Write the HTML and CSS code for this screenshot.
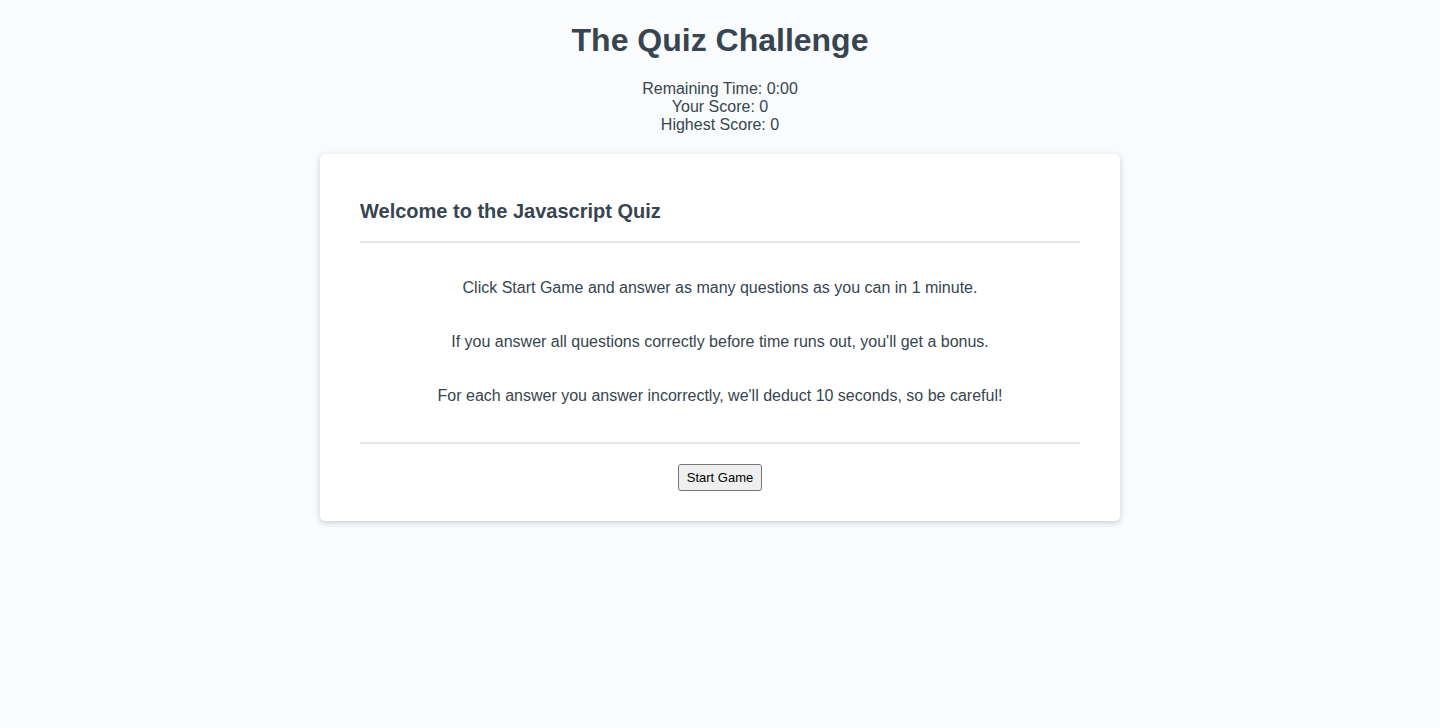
FILE: index.html
```html
<!DOCTYPE html>
<html lang="en">
<head>
<meta charset="utf-8">
<title>The Quiz Challenge</title>
<link rel="stylesheet" href="styles.css">
</head>
<body>
<header class="top">
  <h1 class="title">The Quiz Challenge</h1>
  <div class="stats">
    <div>Remaining Time: 0:00</div>
    <div>Your Score: 0</div>
    <div>Highest Score: 0</div>
  </div>
</header>
<main class="card">
  <div class="card-header">
    <h2 class="card-title">Welcome to the Javascript Quiz</h2>
  </div>
  <div class="card-body">
    <p>Click Start Game and answer as many questions as you can in 1 minute.</p>
    <p>If you answer all questions correctly before time runs out, you'll get a bonus.</p>
    <p>For each answer you answer incorrectly, we'll deduct 10 seconds, so be careful!</p>
  </div>
  <div class="card-footer">
    <button class="btn" type="button">Start Game</button>
  </div>
</main>
</body>
</html>
```

FILE: styles.css
```css
html, body {
  margin: 0;
  padding: 0;
}
body {
  background: #f9fbfd;
  color: #36454f;
  font-family: "Liberation Sans", Arial, Helvetica, sans-serif;
  font-size: 16px;
  line-height: 18px;
  min-height: 728px;
}
.top {
  text-align: center;
  padding-top: 22px;
}
.title {
  margin: 0;
  font-size: 32px;
  line-height: 37px;
  font-weight: bold;
}
.stats {
  margin-top: 21px;
}
.card {
  width: 800px;
  box-sizing: border-box;
  margin: 20px auto 0;
  background: #fff;
  border-radius: 5px;
  box-shadow: 0 2px 6px rgba(0, 0, 0, 0.18);
  padding: 46px 40px 30px;
}
.card-header {
  padding-bottom: 18px;
  border-bottom: 2px solid #e6e6e6;
}
.card-title {
  margin: 0;
  font-size: 20px;
  line-height: 23px;
  font-weight: bold;
}
.card-body {
  padding: 36px 0 37px;
  border-bottom: 2px solid #e6e6e6;
  display: flex;
  flex-direction: column;
  gap: 36px;
  text-align: center;
}
.card-body p {
  margin: 0;
  line-height: 18px;
}
.card-footer {
  padding-top: 20px;
  text-align: center;
}
.btn {
  font-family: "Liberation Sans", Arial, sans-serif;
  font-size: 13px;
  line-height: 15px;
  color: #000;
  background: #efefef;
  border: 1px solid #767676;
  border-radius: 3px;
  padding: 5px 8px;
}
```
